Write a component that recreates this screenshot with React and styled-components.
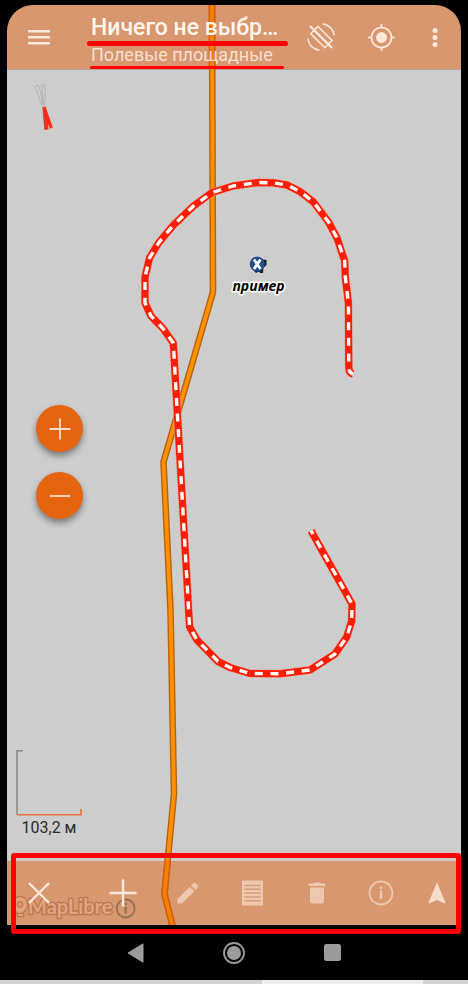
import React from 'react';
import styled, { createGlobalStyle } from 'styled-components';

const GlobalStyle = createGlobalStyle`
    * {
      box-sizing: border-box;
    }

    body {
      margin: 0;
      background-color: #000;
      font-family: Roboto, "Noto Sans", sans-serif;
    }
`

const Phone = styled.div`
    display: flex;
    flex-direction: column;
    min-height: 100vh;
    background-color: #000;
`

const Screen = styled.div`
    position: relative;
    flex: 1;
    display: flex;
    flex-direction: column;
    margin: 5px 7px 0;
`

const Header = styled.header`
    display: flex;
    align-items: flex-start;
    height: 65px;
    padding-right: 2px;
    border-bottom: 1px solid #b5a59b;
    border-radius: 26px 26px 0 0;
    background-color: #d8976e;
`

const IconButton = styled.button`
    position: relative;
    z-index: 2;
    display: flex;
    align-items: center;
    justify-content: center;
    flex: none;
    width: ${({ $width }) => $width || '100%'};
    height: 64px;
    padding: 0;
    padding-left: ${({ $indent }) => $indent || '0'};
    border: none;
    background: none;
    color: ${({ $dim }) => $dim ? '#ecc8b0' : '#fce9dc'};
    cursor: pointer;

    svg {
      display: block;
    }
`

const Titles = styled.div`
    position: relative;
    z-index: 2;
    flex: 1;
    min-width: 0;
    padding: 10px 0 0 16px;
    white-space: nowrap;
`

const Title = styled.h1`
    margin: 0;
    padding: 0 0 0 4px;
    font-size: 23px;
    font-weight: 500;
    line-height: 26px;
    color: #fff6ee;
`

const Subtitle = styled.p`
    margin: 0;
    padding: 3px 0 0 4px;
    font-size: 18px;
    line-height: 22px;
    color: #f7dfd0;
`

const Underline = styled.div`
    width: ${({ $width }) => $width};
    height: ${({ $thick }) => $thick ? '5px' : '3px'};
    margin: ${({ $thick }) => $thick ? '0 0 -5px' : '0 0 0 3px'};
    border-radius: 3px;
    background-color: #fe0000;
`

const MapCanvas = styled.svg`
    position: absolute;
    z-index: 1;
    inset: 0;
    width: 100%;
    height: 100%;
    pointer-events: none;
`

const MapArea = styled.main`
    flex: 1;
    display: flex;
    flex-direction: column;
    align-items: flex-start;
    padding: 14px 9px 22px;
    background-color: #cdcdcd;
`

const Compass = styled.svg`
    margin-left: 16px;
`

const ZoomControls = styled.div`
    flex: 1;
    display: flex;
    flex-direction: column;
    justify-content: center;
    gap: 20px;
    padding: 42px 0 0 20px;
`

const ZoomButton = styled.button`
    display: flex;
    align-items: center;
    justify-content: center;
    width: 47px;
    height: 47px;
    padding: 0;
    border: none;
    border-radius: 50%;
    background-color: #e4640f;
    box-shadow: 0 4px 6px rgba(0, 0, 0, 0.4);
    cursor: pointer;
`

const Scale = styled.div`
    display: flex;
    flex-direction: column;
    align-items: center;
    font-size: 16px;
    line-height: 23px;
    color: #2b2b2b;

    svg {
      display: block;
    }
`

const Toolbar = styled.div`
    position: relative;
    display: grid;
    grid-template-columns: 64fr 84fr 65fr 64fr 65fr 64fr 48fr;
    height: 64px;
    background-color: #d8976e;
`

const Highlight = styled.div`
    position: absolute;
    z-index: 3;
    inset: -8px 0 -9px 4px;
    border: 5px solid #fe0000;
    border-radius: 3px;
    pointer-events: none;
`

const SystemNav = styled.nav`
    display: flex;
    align-items: center;
    justify-content: center;
    height: 55px;
`

const SystemButton = styled.button`
    display: flex;
    align-items: center;
    justify-content: center;
    width: 98px;
    height: 48px;
    padding: 0;
    border: none;
    background: none;
    color: #9b9b9b;
`

const Strip = styled.div`
    height: 4px;
    padding-left: 56%;
    background-color: #d3d3d3;
`

const StripThumb = styled.div`
    width: 78%;
    height: 4px;
    background-color: #ececec;
`

const TRACK = 'M212 0 L213 292 L163.500 462 L170.500 610 L174 794 L164.500 894 L173 928'
const ROUTE = `M311 530.700 L352 604 L351.700 621 L346.700 637 L335 654 L310 670 L280 673.700 L250 673.500
  L230 667.500 L218 661.500 L197 640 L189.600 627 L173.300 343 L163 328.500 L151 316 L145 303 L145 277
  L149.500 258 L158.500 243 L173.500 225 L193.500 206 L212 192.500 L233 186 L258 182.500 L273 182.800
  L287 185 L300 191.500 L313.500 202 L328.500 222 L337 238 L344.700 261 L345.300 277 L348.400 303
  L348.800 368 Q349 373 353 374`

function MapLayer() {
  return(
    <MapCanvas viewBox='7 5 454 920' preserveAspectRatio='xMidYMid meet'>
      <g fill='none' strokeLinejoin='round'>
        <path d={TRACK} stroke='#b9620c' strokeWidth='6.600' />
        <path d={TRACK} stroke='#ff9100' strokeWidth='3.800' />
        <path d='M212 0 L212 69 M167.600 861 L164.500 894 L173 928' stroke='#cf5f0a' strokeWidth='6.600' />
        <path d='M212 0 L212 69 M167.600 861 L164.500 894 L173 928' stroke='#f97d04' strokeWidth='3.800' />
        <path d={ROUTE} stroke='#e89c92' strokeWidth='8' />
        <path d={ROUTE} stroke='#ff1c00' strokeWidth='7' />
        <path d={ROUTE} stroke='#fff' strokeWidth='3.400' strokeDasharray='8 7.680' strokeDashoffset='4' />
      </g>

      <circle cx='257.500' cy='264.500' r='9' fill='#dfd3d6' />
      <path d='M263 259.500 L266.500 260 L266.500 265 L263.500 268 L263 273 H260 L259 271.500 L256 273 L254 271 Z' fill='#151c26' />
      <circle cx='257.200' cy='264' r='7.600' fill='#21508f' />
      <path d='M254 259.500 L260.500 269 M260.500 259.500 L254 269' stroke='#fff' strokeWidth='2.800' />
      <text x='258.500' y='290.500' textAnchor='middle' fontFamily='"Open Sans", "Noto Sans", sans-serif'
        fontSize='14' fontWeight='700' fontStyle='italic' fill='#000' stroke='#fff' strokeWidth='3'
        strokeLinejoin='round' paintOrder='stroke'>пример</text>

      <g fill='#e2a480' stroke='#bd7650' strokeWidth='2.600' strokeLinejoin='round' paintOrder='stroke'>
        <path fillRule='evenodd' d='M20 897 a7.500 7.500 0 0 1 7 8 c0 4 -4 6 -5 9 h-3.500 c-1 -3 -5.500 -5 -5.500 -9 a7.500 7.500 0 0 1 7 -8 Z M20 901 a3.500 3.500 0 1 0 0.100 0 Z' />
        <path d='M18 914 h5 v2 h-5 Z' />
        <text x='28' y='914' fontFamily='Lato, sans-serif' fontSize='20' fontWeight='700'>MapLibre</text>
      </g>
      <g fill='none' stroke='#8d7458' strokeWidth='1.800'>
        <circle cx='125.700' cy='908.500' r='9' />
        <path d='M125.700 906.500 V913.500' strokeWidth='2.400' />
        <path d='M125.700 902.500 V905' strokeWidth='2.400' />
      </g>
    </MapCanvas>
  )
}

function AppHeader() {
  return(
    <Header>
      <IconButton $width='64px' aria-label='Меню'>
        <svg width='22' height='16' viewBox='0 0 22 16' fill='currentColor'>
          <path d='M0 1h22v2.400H0zM0 7h22v2.400H0zM0 13h22v2.400H0z' />
        </svg>
      </IconButton>
      <Titles>
        <Title>Ничего не выбр…</Title>
        <Underline $thick $width='201px' />
        <Subtitle>Полевые площадные</Subtitle>
        <Underline $width='194px' />
      </Titles>
      <IconButton $width='60px' aria-label='Поворот карты'>
        <svg width='28' height='28' viewBox='0 0 28 28' fill='none' stroke='currentColor' strokeWidth='1.600'>
          <path d='M11 3.500 L25 17.500 L17.800 24.700 L3.800 10.700 Z' />
          <path d='M15.500 0.900 A13 13 0 0 1 27.200 12.500 M0.800 15.500 A13 13 0 0 0 12.500 27.200' />
          <path d='M3 3 L25 25' strokeWidth='2.400' />
        </svg>
      </IconButton>
      <IconButton $width='60px' aria-label='Моё местоположение'>
        <svg width='28' height='28' viewBox='0 0 28 28' fill='none' stroke='currentColor' strokeWidth='1.700'>
          <circle cx='14.500' cy='14.500' r='10' />
          <circle cx='14.500' cy='14.500' r='5.400' fill='currentColor' stroke='none' />
          <path d='M14.500 1V4.500M14.500 24.500V28M1 14.500H4.500M24.500 14.500H28' />
        </svg>
      </IconButton>
      <IconButton $width='48px' aria-label='Ещё'>
        <svg width='6' height='20' viewBox='0 0 6 20' fill='currentColor'>
          <circle cx='3' cy='3.500' r='2.500' />
          <circle cx='3' cy='10.500' r='2.500' />
          <circle cx='3' cy='17.500' r='2.500' />
        </svg>
      </IconButton>
    </Header>
  )
}

function EditToolbar() {
  return(
    <Toolbar>
      <IconButton aria-label='Закрыть'>
        <svg width='22' height='22' viewBox='0 0 22 22' stroke='currentColor' strokeWidth='2.400'>
          <path d='M1 1L21 21M21 1L1 21' />
        </svg>
      </IconButton>
      <IconButton $indent='20px' aria-label='Добавить'>
        <svg width='28' height='28' viewBox='0 0 28 28' stroke='currentColor' strokeWidth='2.500'>
          <path d='M14 0.500V27.500M0.500 14H27.500' />
        </svg>
      </IconButton>
      <IconButton $dim aria-label='Изменить'>
        <svg width='22' height='22' viewBox='0 0 22 22' fill='currentColor'>
          <path d='M0.500 17 L12.800 4.700 L17.300 9.200 L5 21.500 H0.500 Z M14 3.500 L16.200 1.300 Q17.500 0.300 18.800 1.300 L20.700 3.200 Q21.800 4.500 20.700 5.800 L18.500 8 Z' />
        </svg>
      </IconButton>
      <IconButton $dim aria-label='Список'>
        <svg width='21' height='26' viewBox='0 0 21 26'>
          <path d='M0 0.500H21V25.500H0Z' fill='currentColor' />
          <path d='M2.500 5.500H18.500M2.500 9.300H18.500M2.500 13.100H18.500M2.500 16.900H18.500M2.500 20.700H18.500' stroke='#d99a73' strokeWidth='1.500' />
        </svg>
      </IconButton>
      <IconButton $dim aria-label='Удалить'>
        <svg width='18' height='22' viewBox='0 0 18 22' fill='currentColor'>
          <path d='M6 0.500H12L13 1.500H17.300V4H0.700V1.500H5Z' />
          <path d='M2 5.500H16V19.500Q16 21.500 14 21.500H4Q2 21.500 2 19.500Z' />
        </svg>
      </IconButton>
      <IconButton $dim aria-label='Информация'>
        <svg width='26' height='26' viewBox='0 0 26 26' fill='none' stroke='currentColor' strokeWidth='1.800'>
          <circle cx='13' cy='13' r='11.500' />
          <path d='M13 10.500V19M13 6.500V9' strokeWidth='2.400' />
        </svg>
      </IconButton>
      <IconButton aria-label='Навигация'>
        <svg width='18' height='22' viewBox='0 0 18 22' fill='#f5dccb'>
          <path d='M9 0.500L17.500 20.800L16.800 21.500L9 18L1.200 21.500L0.500 20.800Z' />
        </svg>
      </IconButton>
      <Highlight />
    </Toolbar>
  )
}

export default function App() {
  return(
    <Phone>
      <GlobalStyle />
      <Screen>
        <AppHeader />
        <MapArea>
          <Compass width='22' height='48' viewBox='0 0 22 48'>
            <path d='M10.500 22.500 L3.500 3.500 Q3 1.500 5 1.500 L7 2 L11.500 21 L9.800 2 Q10 0.500 12 1 L13 2 L13 22.500' fill='#d0d0d0' stroke='#a9a9a9' strokeWidth='0.800' />
            <path d='M11.500 23 L13.200 45.500' stroke='#80645f' strokeWidth='2' />
            <path d='M10.800 23 L13.500 22.500 L20.800 43.500 L18 44.800 L16 40 L16.500 45.500 L13 46 Z' fill='#ff2a17' />
          </Compass>
          <ZoomControls>
            <ZoomButton aria-label='Приблизить'>
              <svg width='22' height='22' viewBox='0 0 22 22' stroke='#fbdcc6' strokeWidth='1.800'>
                <path d='M11 0.500V21.500M0.500 11H21.500' />
              </svg>
            </ZoomButton>
            <ZoomButton aria-label='Отдалить'>
              <svg width='22' height='22' viewBox='0 0 22 22' stroke='#fbdcc6' strokeWidth='1.800'>
                <path d='M0.500 11H21.500' />
              </svg>
            </ZoomButton>
          </ZoomControls>
          <Scale>
            <svg width='66' height='66' viewBox='0 0 66 66' fill='none'>
              <path d='M7 0.800H1V65' stroke='#868686' strokeWidth='1.500' />
              <path d='M1 64.700H65V59' stroke='#e8703f' strokeWidth='1.600' />
            </svg>
            103,2 м
          </Scale>
        </MapArea>
        <EditToolbar />
        <MapLayer />
      </Screen>
      <SystemNav>
        <SystemButton aria-label='Назад'>
          <svg width='18' height='20' viewBox='0 0 18 20' fill='currentColor'>
            <path d='M1 10L16 0.800V19.200Z' stroke='currentColor' strokeLinejoin='round' />
          </svg>
        </SystemButton>
        <SystemButton aria-label='Домой'>
          <svg width='24' height='24' viewBox='0 0 24 24'>
            <circle cx='12' cy='12' r='10' fill='none' stroke='currentColor' strokeWidth='1.800' />
            <circle cx='12' cy='12' r='7' fill='currentColor' />
          </svg>
        </SystemButton>
        <SystemButton aria-label='Недавние'>
          <svg width='17' height='17' viewBox='0 0 17 17' fill='currentColor'>
            <rect width='17' height='17' rx='2.500' />
          </svg>
        </SystemButton>
      </SystemNav>
      <Strip>
        <StripThumb />
      </Strip>
    </Phone>
  )
}
